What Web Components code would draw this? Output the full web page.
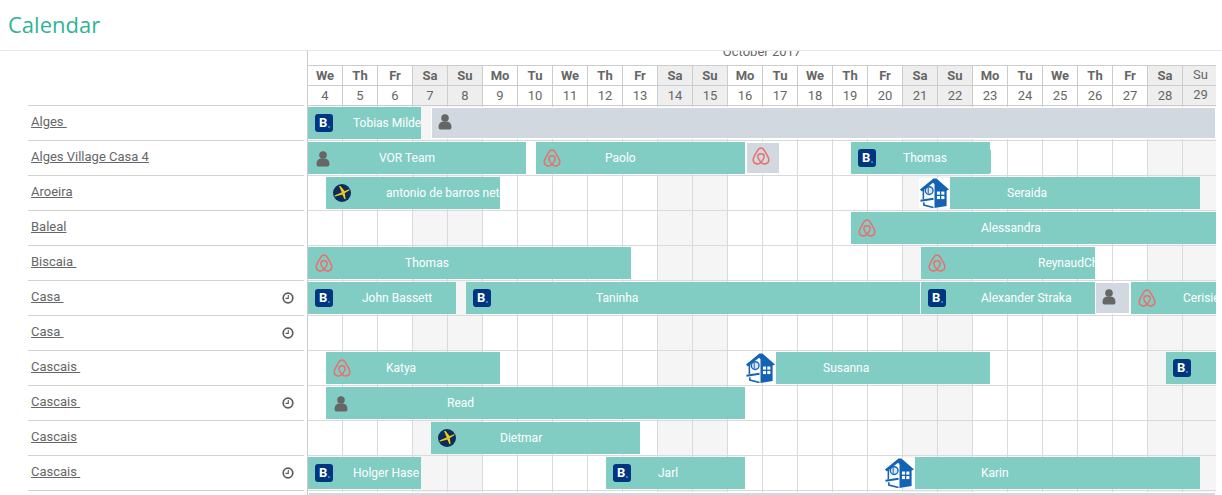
<!DOCTYPE html>
<html>
<head>
<meta charset="utf-8">
<title>Calendar</title>
<style>
  html, body { margin: 0; height: 495px; overflow: hidden; background: #fff; }
  body { font-family: Roboto, "Liberation Sans", sans-serif; color: #666; }
</style>
</head>
<body>
<cal-page>
  <cal-head></cal-head>
  <cal-row name="Alges&nbsp;">
    <cal-bar source="booking" start="0" width="113" at="45">Tobias Milde</cal-bar>
    <cal-bar source="person" kind="blocked" start="123" width="785"></cal-bar>
  </cal-row>
  <cal-row name="Alges Village Casa 4">
    <cal-bar source="person" start="0" width="218" at="71">VOR Team</cal-bar>
    <cal-bar source="airbnb" start="228" width="209" at="69">Paolo</cal-bar>
    <cal-bar source="airbnb" kind="blocked" start="438" width="34"></cal-bar>
    <cal-bar source="booking" start="543" width="139" at="52" notch>Thomas</cal-bar>
  </cal-row>
  <cal-row name="Aroeira">
    <cal-bar source="expedia" start="18" width="174" at="60">antonio de barros neto</cal-bar>
    <cal-bar source="homeaway" start="642" width="250" at="57">Seraida</cal-bar>
  </cal-row>
  <cal-row name="Baleal">
    <cal-bar source="airbnb" start="543" width="365" at="130">Alessandra</cal-bar>
  </cal-row>
  <cal-row name="Biscaia&nbsp;">
    <cal-bar source="airbnb" start="0" width="323" at="97">Thomas</cal-bar>
    <cal-bar source="airbnb" start="613" width="174" at="117">ReynaudCh</cal-bar>
  </cal-row>
  <cal-row name="Casa&nbsp;" clock>
    <cal-bar source="booking" start="0" width="148" at="54">John Bassett</cal-bar>
    <cal-bar source="booking" start="158" width="454" at="130">Taninha</cal-bar>
    <cal-bar source="booking" start="613" width="174" at="60">Alexander Straka</cal-bar>
    <cal-bar source="person" kind="blocked" start="787" width="35"></cal-bar>
    <cal-bar source="airbnb" start="823" width="85" at="52">Cerisier</cal-bar>
  </cal-row>
  <cal-row name="Casa&nbsp;" clock></cal-row>
  <cal-row name="Cascais&nbsp;">
    <cal-bar source="airbnb" start="18" width="174" at="60">Katya</cal-bar>
    <cal-bar source="homeaway" start="468" width="214" at="47">Susanna</cal-bar>
    <cal-bar source="booking" start="858" width="50" at="60"></cal-bar>
  </cal-row>
  <cal-row name="Cascais&nbsp;" clock>
    <cal-bar source="person" start="18" width="419" at="121">Read</cal-bar>
  </cal-row>
  <cal-row name="Cascais">
    <cal-bar source="expedia" start="123" width="209" at="69">Dietmar</cal-bar>
  </cal-row>
  <cal-row name="Cascais&nbsp;" clock>
    <cal-bar source="booking" start="0" width="113" at="45">Holger Hase</cal-bar>
    <cal-bar source="booking" start="298" width="139" at="52">Jarl</cal-bar>
    <cal-bar source="homeaway" start="607" width="285" at="66">Karin</cal-bar>
  </cal-row>
  <cal-row>
    <cal-bar source="" kind="blocked" start="0" width="908"></cal-bar>
  </cal-row>
</cal-page>

<script>
const DAYS = [];
const NAMES = ['Su', 'Mo', 'Tu', 'We', 'Th', 'Fr', 'Sa'];
for (let d = 4; d <= 29; d++) {
  const wd = (d - 1) % 7; // 1 oct 2017 is a sunday
  DAYS.push({ num: d, name: NAMES[wd], weekend: wd === 0 || wd === 6 });
}

const ICONS = {
  booking: `<span class="bk">B<i></i></span>`,
  person: `<svg width="14" height="16" viewBox="0 0 14 16" style="margin:2px 0 0 1px"><circle cx="7" cy="4" r="3.8" fill="#666"/><path d="M0.5 13 C0.5 9.5 2.5 7.6 5 7.4 L9 7.4 C11.5 7.6 13.5 9.5 13.5 13 C13.5 14.8 12.5 15.6 11 15.6 L3 15.6 C1.5 15.6 0.5 14.8 0.5 13 Z" fill="#666"/></svg>`,
  airbnb: `<svg width="18" height="18" viewBox="0 0 24 24" fill="none" stroke="#e8706f" stroke-width="2"><path d="M12 20.5 C10 22.5 7 23 4.8 22 C2.2 20.8 1 18 2 15 C3 12 8 3.5 9.5 2.2 C11 1 13 1 14.5 2.2 C16 3.5 21 12 22 15 C23 18 21.8 20.8 19.2 22 C17 23 14 22.5 12 20.5"/><path d="M12 20.5 C9.5 17.5 7.8 14.5 7.8 12.5 C7.8 10.5 9.7 9 12 9 C14.3 9 16.2 10.5 16.2 12.5 C16.2 14.5 14.5 17.5 12 20.5"/></svg>`,
  expedia: `<svg width="18" height="18" viewBox="0 0 18 18"><circle cx="9" cy="9" r="9" fill="#0b2d5b"/><path d="M1.5 11.5 L16 5.2 Q17.2 5.4 16.4 6.3 L9.5 10.5 L2 12.6 Z" fill="#f2c81e"/><path d="M6 2 L7.5 2 L12 7.5 L9 9 Z" fill="#f2c81e"/><path d="M9.2 10 L11.8 9 L12.6 15 L11.5 15.2 Z" fill="#f2c81e"/></svg>`,
  homeaway: `<svg width="31" height="30" viewBox="0 0 32 31" preserveAspectRatio="none"><rect width="32" height="31" fill="#fff"/><path d="M1 12 L15 0.5 L18 0.5 L31 12 L28.5 13 L28.5 29 L16 31 L16 6.5 L14.5 5 L3 14 Z" fill="#1263b5"/><path d="M4.5 12 L4.5 22 M5 25 L5 28 L15 30.5" stroke="#1263b5" stroke-width="1.6" fill="none"/><circle cx="10.5" cy="13" r="4" fill="#dbe8f5" stroke="#1263b5" stroke-width="1.4"/><path d="M9.5 10 L9.5 16" stroke="#1263b5"/><path d="M1.5 23.5 L15 21.5" stroke="#1263b5" stroke-width="2"/><rect x="18.5" y="14" width="3.2" height="3.2" fill="#fff"/><rect x="23" y="14" width="3.2" height="3.2" fill="#fff"/><rect x="18.5" y="18.6" width="3.2" height="3.2" fill="#fff"/><rect x="23" y="18.6" width="3.2" height="3.2" fill="#fff"/></svg>`
};

class CalPage extends HTMLElement {
  connectedCallback() {
    this.attachShadow({ mode: 'open' });
    this.shadowRoot.innerHTML = `
      <style>
        :host { display: block; width: 1222px; height: 495px; overflow: hidden; }
        header {
          height: 48px;
          border-bottom: 1px solid #e7e7e7;
          padding: 0 0 2px 8px;
          display: flex;
          align-items: center;
        }
        h1 {
          margin: 0;
          font: 400 22px "Open Sans", sans-serif;
          color: #2fb397;
        }
      </style>
      <header><h1>Calendar</h1></header>
      <slot></slot>
    `;
  }
}

class CalHead extends HTMLElement {
  connectedCallback() {
    this.attachShadow({ mode: 'open' });
    const cells = (key) => DAYS.map(d => {
      const cls = (d.weekend ? 'we ' : '') + (d.num === 29 ? 'last' : '');
      return `<div class="${cls}"><span>${d[key]}</span></div>`;
    }).join('');
    this.shadowRoot.innerHTML = `
      <style>
        :host { display: flex; width: 1216px; height: 55px; }
        .side { width: 276px; margin-left: 28px; margin-right: 3px; border-bottom: 1px solid #d4d4cc; }
        .main { width: 908px; border-left: 1px solid #ccc; overflow: hidden; }
        .month {
          height: 14px;
          overflow: hidden;
          text-align: center;
          font-size: 13px;
          line-height: 2px;
          color: #666;
          border-bottom: 1px solid #ccc;
        }
        .line { display: grid; grid-template-columns: repeat(26, 35px); height: 20px; }
        .line div {
          box-sizing: border-box;
          border-right: 1px solid #ccc;
          border-bottom: 1px solid #ccc;
          text-align: center;
          font-size: 13px;
          line-height: 19px;
          color: #666;
        }
        .names div { font-weight: 700; }
        .we { background: #eee; }
        .line div.last { font-weight: 400; border-right: 0; }
        .last span { position: relative; top: -1px; }
      </style>
      <div class="side"></div>
      <div class="main">
        <div class="month">October 2017</div>
        <div class="line names">${cells('name')}</div>
        <div class="line">${cells('num')}</div>
      </div>
    `;
  }
}

class CalRow extends HTMLElement {
  connectedCallback() {
    this.attachShadow({ mode: 'open' });
    const name = this.getAttribute('name');
    const clock = this.hasAttribute('clock') ? `
      <svg class="clock" width="12" height="12" viewBox="0 0 12 12" fill="none" stroke="#5c5c5c">
        <circle cx="6" cy="6" r="4.8" stroke-width="1.7"/>
        <path d="M6.3 3 L6.3 6.4 L3.6 6.4" stroke-width="1.1"/>
      </svg>` : '';
    const cells = DAYS.map(d => `<div class="${d.weekend ? 'we' : ''}"></div>`).join('');
    this.shadowRoot.innerHTML = `
      <style>
        :host { display: flex; width: 1216px; height: 35px; }
        .label {
          width: 276px;
          margin-left: 28px;
          margin-right: 3px;
          box-sizing: border-box;
          border-bottom: 1px solid #d4d4cc;
          padding: 0 10px 4px 3px;
          display: flex;
          align-items: center;
          justify-content: space-between;
        }
        a { font-size: 13px; color: #666; text-decoration: underline; }
        .clock { margin-top: 4px; }
        .track {
          position: relative;
          width: 908px;
          border-left: 1px solid #ccc;
          overflow: hidden;
        }
        .cells { display: grid; grid-template-columns: repeat(26, 35px); height: 35px; }
        .cells div {
          box-sizing: border-box;
          border-right: 1px solid #dadada;
          border-bottom: 1px solid #dadada;
        }
        .cells .we { background: #f5f5f5; }
      </style>
      <div class="label">${name ? `<a href="#">${name}</a>` : ''}${clock}</div>
      <div class="track">
        <div class="cells">${cells}</div>
        <slot></slot>
      </div>
    `;
  }
}

class CalBar extends HTMLElement {
  connectedCallback() {
    this.attachShadow({ mode: 'open' });
    const source = this.getAttribute('source');
    const blocked = this.getAttribute('kind') === 'blocked';
    const at = this.getAttribute('at') || 0;
    // bars lie over the day cells
    this.style.left = this.getAttribute('start') + 'px';
    this.style.width = this.getAttribute('width') + 'px';
    const house = source === 'homeaway';
    this.shadowRoot.innerHTML = `
      <style>
        :host {
          position: absolute;
          top: 1px;
          height: 32px;
          box-sizing: border-box;
          background: #81cdc4;
          color: #fff;
          font-size: 12px;
        }
        :host(.blocked) { background: #d1d8df; border: 1px solid #fff; }
        .name {
          display: block;
          height: 100%;
          line-height: 33px;
          white-space: nowrap;
          overflow: hidden;
          padding-left: ${at}px;
          box-sizing: border-box;
        }
        .notch { position: absolute; right: -1px; top: 8px; bottom: 1px; width: 1px; background: #81cdc4; }
        .icon { position: absolute; left: 7px; top: 7px; display: block; line-height: 0; }
        :host(.blocked) .icon { left: 5px; top: 4px; }
        .icon.out { left: -31px; top: 1px; }
        .bk {
          display: block;
          width: 18px;
          height: 18px;
          border-radius: 3px;
          background: #003580;
          font: 700 13px/18px Roboto, sans-serif;
          color: #fff;
          text-indent: 4px;
          position: relative;
        }
        .bk i {
          position: absolute;
          right: 3px;
          bottom: 4px;
          width: 2px;
          height: 2px;
          background: #1a86d0;
        }
      </style>
      <span class="name"><slot></slot></span>
      ${this.hasAttribute('notch') ? '<span class="notch"></span>' : ''}
      ${source ? `<span class="icon ${house ? 'out' : ''}">${ICONS[source]}</span>` : ''}
    `;
    if (blocked) this.classList.add('blocked');
  }
}

customElements.define('cal-page', CalPage);
customElements.define('cal-head', CalHead);
customElements.define('cal-row', CalRow);
customElements.define('cal-bar', CalBar);
</script>
</body>
</html>
